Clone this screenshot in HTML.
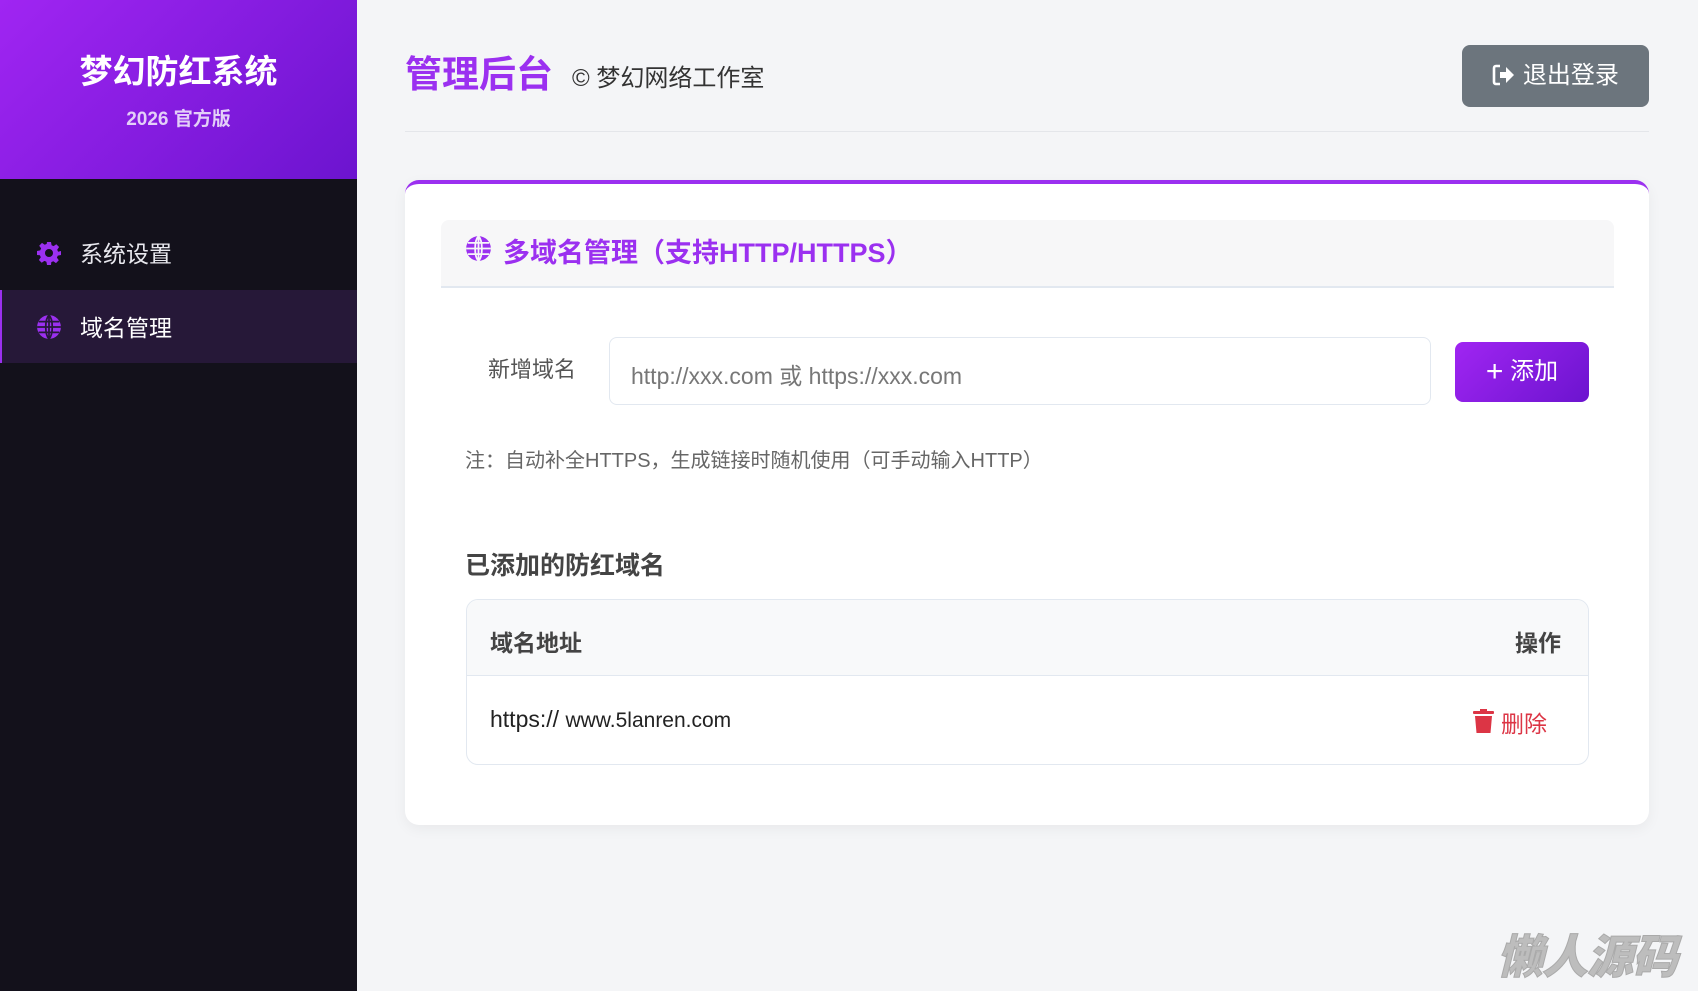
<!DOCTYPE html>
<html><head><meta charset="utf-8"><style>
*{margin:0;padding:0;box-sizing:border-box}
body{width:1698px;height:991px;background:#f4f5f7;font-family:"Liberation Sans","Noto Sans CJK SC",sans-serif;position:relative;overflow:hidden}
.a{position:absolute;white-space:nowrap}
.sb{position:absolute;left:0;top:0;width:357px;height:991px;background:#13111b}
.sbh{position:absolute;left:0;top:0;width:357px;height:179px;background:linear-gradient(135deg,#a025f2,#6c14cf)}
</style></head><body>
<div class="sb"></div>
<div class="sbh"></div>
<div class="a" style="left:0;width:357px;text-align:center;top:45px;font-size:33px;font-weight:bold;color:#fff">梦幻防红系统</div>
<div class="a" style="left:0;width:357px;text-align:center;top:104px;font-size:19px;font-weight:bold;color:#e3cff8">2026 官方版</div>
<svg class="a" style="left:37px;top:241px" width="24" height="24" viewBox="0 0 24 24"><path fill="#9b30f0" d="M10 1h4l.6 3.2 2 .9 2.7-1.9 2.8 2.8-1.9 2.7.9 2L24 10v4l-3.2.6-.9 2 1.9 2.7-2.8 2.8-2.7-1.9-2 .9L14 24h-4l-.6-3.2-2-.9-2.7 1.9-2.8-2.8 1.9-2.7-.9-2L0 14v-4l3.2-.6.9-2L2.2 4.7 5 1.9l2.7 1.9 2-.9zM12 8a4 4 0 1 0 0 8 4 4 0 0 0 0-8z"/></svg>
<div class="a" style="left:80px;top:235px;font-size:23px;color:#e8e8ee">系统设置</div>
<div class="a" style="left:0;top:290px;width:357px;height:73px;background:#261838;border-left:2px solid #9b30f0"></div>
<svg class="a" style="left:36px;top:314px" width="26" height="26" viewBox="0 0 24 24"><circle cx="12" cy="12" r="11" fill="#9b30f0"/><path d="M12 1v22M1 12h22M12 1c-4 4-4 18 0 22M12 1c4 4 4 18 0 22M2.5 7h19M2.5 17h19" stroke="#261838" stroke-width="1.6" fill="none"/></svg>
<div class="a" style="left:80px;top:309px;font-size:23px;color:#fff">域名管理</div>

<div class="a" style="left:405px;top:44px;font-size:37px;font-weight:bold;color:#9b30f0">管理后台</div>
<div class="a" style="left:572px;top:58px;font-size:24px;color:#333">© 梦幻网络工作室</div>
<div class="a" style="left:1462px;top:45px;width:187px;height:62px;background:#6c757d;border-radius:8px;color:#fff;font-size:24px;line-height:62px;text-align:center">
<svg style="vertical-align:-3px" width="24" height="22" viewBox="0 0 24 22"><path d="M8 2H4a2 2 0 0 0-2 2v14a2 2 0 0 0 2 2h4" stroke="#fff" stroke-width="2.6" fill="none"/><path fill="#fff" d="M8 8h6V3l8 8-8 8v-5H8z"/></svg> 退出登录</div>
<div class="a" style="left:405px;top:131px;width:1244px;height:1px;background:#e4e6ea"></div>

<div class="a" style="left:405px;top:180px;width:1244px;height:645px;background:#fff;border-radius:14px;border-top:4px solid #9b30f0;box-shadow:0 4px 14px rgba(0,0,0,.05)"></div>
<div class="a" style="left:441px;top:220px;width:1173px;height:68px;background:#f7f7f8;border-bottom:2px solid #e2e8f0;border-radius:8px 8px 0 0"></div>
<svg class="a" style="left:465px;top:235px" width="27" height="27" viewBox="0 0 24 24"><circle cx="12" cy="12" r="11" fill="#9b30f0"/><path d="M12 1v22M1 12h22M12 1c-4 4-4 18 0 22M12 1c4 4 4 18 0 22M2.5 7h19M2.5 17h19" stroke="#f7f7f8" stroke-width="1.6" fill="none"/></svg>
<div class="a" style="left:503px;top:231px;font-size:27px;font-weight:bold;color:#9b30f0">多域名管理（支持HTTP/HTTPS）</div>

<div class="a" style="left:488px;top:352px;font-size:22px;color:#555">新增域名</div>
<div class="a" style="left:609px;top:337px;width:822px;height:68px;border:1px solid #e2e8f0;border-radius:8px;background:#fff"></div>
<div class="a" style="left:631px;top:357px;font-size:23px;color:#777">http://xxx.com 或 https://xxx.com</div>
<div class="a" style="left:1455px;top:342px;width:134px;height:60px;border-radius:8px;background:linear-gradient(135deg,#a025f2,#6c14cf);color:#fff;font-size:24px;line-height:60px;text-align:center"><span style="font-size:30px;vertical-align:-2px">+</span> 添加</div>
<div class="a" style="left:465px;top:444px;font-size:20px;color:#666">注：自动补全HTTPS，生成链接时随机使用（可手动输入HTTP）</div>

<div class="a" style="left:465px;top:546px;font-size:25px;font-weight:bold;color:#444">已添加的防红域名</div>
<div class="a" style="left:466px;top:599px;width:1123px;height:166px;border:1px solid #e2e8f0;border-radius:12px;overflow:hidden;background:#fff">
<div style="height:76px;background:#f8f9fa;border-bottom:1px solid #e2e8f0"></div></div>
<div class="a" style="left:490px;top:624px;font-size:23px;font-weight:bold;color:#444">域名地址</div>
<div class="a" style="left:1515px;top:624px;font-size:23px;font-weight:bold;color:#444">操作</div>
<div class="a" style="left:490px;top:706px;font-size:23px;color:#222">https:// <span style="font-size:21px">www.5lanren.com</span></div>
<svg class="a" style="left:1473px;top:709px" width="21" height="24" viewBox="0 0 21 24"><rect x="0" y="2" width="21" height="3" rx="1" fill="#dc3545"/><rect x="7" y="0" width="7" height="3" fill="#dc3545"/><path d="M2 7h17l-1.5 17h-14z" fill="#dc3545"/></svg>
<div class="a" style="left:1501px;top:705px;font-size:23px;color:#dc3545">删除</div>

<div class="a" style="left:1497px;top:921px;font-size:46px;font-weight:900;font-style:italic;color:#bdbdbd;letter-spacing:-1px;-webkit-text-stroke:1px #aaa">懒人源码</div>
</body></html>
